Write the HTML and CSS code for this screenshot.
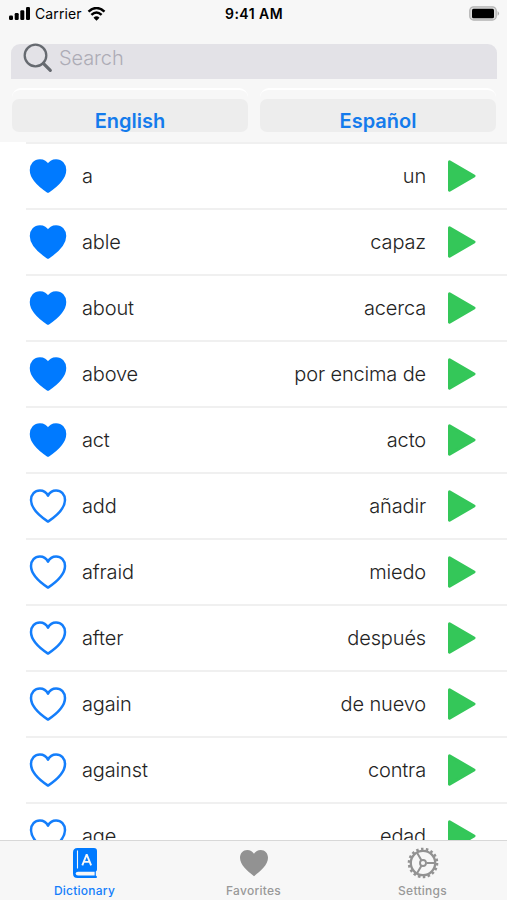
FILE: index.html
```html
<!DOCTYPE html>
<html lang="en">
<head>
<meta charset="utf-8">
<title>Dictionary</title>
<link rel="stylesheet" href="styles.css">
</head>
<body>
<svg class="defs" aria-hidden="true">
  <symbol id="heart" viewBox="0 0 38 34"><path d="M19 6.600C17.200 3 14.300 1.400 10.900 1.400C5.800 1.400 2 5.300 2 11C2 19.200 9.900 26.600 19 32.600C28.100 26.600 36 19.200 36 11C36 5.300 32.200 1.400 27.100 1.400C23.700 1.400 20.800 3 19 6.600Z"/></symbol>
  <symbol id="play" viewBox="0 0 28 32"><path d="M1.500 1.800L26 16L1.500 30.200Z"/></symbol>
</svg>
<div class="phone">
  <header class="top">
    <div class="status">
      <div class="carrier">
        <svg class="signal" viewBox="0 0 22 13"><rect x="0" y="8.500" width="4" height="4.500" rx="1.200"/><rect x="5.700" y="6" width="4" height="7" rx="1.200"/><rect x="11.300" y="3.300" width="4" height="9.700" rx="1.200"/><rect x="17" y="0" width="4" height="13" rx="1.200"/></svg>
        <span>Carrier</span>
        <svg class="wifi" viewBox="0 0 18 14"><path d="M1 4.600Q9-2.500 17 4.600M3.900 7.900Q9 3.200 14.100 7.900" fill="none" stroke="#000" stroke-width="2.500"/><path d="M6 10.700Q9 8 12 10.700L9 13.700Z"/></svg>
      </div>
      <div class="time">9:41 AM</div>
      <svg class="battery" viewBox="0 0 31 15"><rect x=".8" y=".8" width="26.400" height="13.200" rx="3.800" fill="#dcdcdc" stroke="#b4b4b4" stroke-width="1.300"/><rect x="3" y="2.700" width="22" height="9.500" rx="1.500"/><path d="M28.600 5Q31.500 7.400 28.600 9.800Z" fill="#aaa"/></svg>
    </div>
    <div class="search">
      <svg class="lens" viewBox="0 0 30 30"><circle cx="12.500" cy="12.500" r="10.800"/><path d="M20.300 20.300L27.300 27.300" stroke-width="3.200"/></svg>
      <span>Search</span>
    </div>
    <div class="langs">
      <div class="lang"><div class="pill">English</div></div>
      <div class="lang"><div class="pill">Español</div></div>
    </div>
  </header>
  <main class="list">
    <div class="row"><svg class="heart full"><use href="#heart"/></svg><span class="word">a</span><span class="tr">un</span><svg class="play"><use href="#play"/></svg></div>
    <div class="row"><svg class="heart full"><use href="#heart"/></svg><span class="word">able</span><span class="tr">capaz</span><svg class="play"><use href="#play"/></svg></div>
    <div class="row"><svg class="heart full"><use href="#heart"/></svg><span class="word">about</span><span class="tr">acerca</span><svg class="play"><use href="#play"/></svg></div>
    <div class="row"><svg class="heart full"><use href="#heart"/></svg><span class="word">above</span><span class="tr">por encima de</span><svg class="play"><use href="#play"/></svg></div>
    <div class="row"><svg class="heart full"><use href="#heart"/></svg><span class="word">act</span><span class="tr">acto</span><svg class="play"><use href="#play"/></svg></div>
    <div class="row"><svg class="heart"><use href="#heart"/></svg><span class="word">add</span><span class="tr">añadir</span><svg class="play"><use href="#play"/></svg></div>
    <div class="row"><svg class="heart"><use href="#heart"/></svg><span class="word">afraid</span><span class="tr">miedo</span><svg class="play"><use href="#play"/></svg></div>
    <div class="row"><svg class="heart"><use href="#heart"/></svg><span class="word">after</span><span class="tr">después</span><svg class="play"><use href="#play"/></svg></div>
    <div class="row"><svg class="heart"><use href="#heart"/></svg><span class="word">again</span><span class="tr">de nuevo</span><svg class="play"><use href="#play"/></svg></div>
    <div class="row"><svg class="heart"><use href="#heart"/></svg><span class="word">against</span><span class="tr">contra</span><svg class="play"><use href="#play"/></svg></div>
    <div class="row"><svg class="heart"><use href="#heart"/></svg><span class="word">age</span><span class="tr">edad</span><svg class="play"><use href="#play"/></svg></div>
  </main>
  <nav class="tabs">
    <div class="tab active">
      <svg class="tab-icon" viewBox="0 0 32 32"><path d="M8.500 1H25Q28 1 28 4V22.500Q28 24 26.800 24.500V28.500Q28 29 28 30Q28 31 27 31H8.500Q4 31 4 26.500V5.500Q4 1 8.500 1Z" fill="#007aff"/><path d="M8.500 3.500V21.500" stroke="#f7f7f7" stroke-width="1.100"/><path d="M9 24.700H25.600V28.600H9Q6.700 28.600 6.700 26.600Q6.700 24.700 9 24.700Z" fill="#f7f7f7"/><path d="M13.300 18.300L17.500 8H17.900L22.100 18.300M14.900 14.900H20.500" fill="none" stroke="#f7f7f7" stroke-width="1.900"/></svg>
      <span>Dictionary</span>
    </div>
    <div class="tab">
      <svg class="tab-icon" viewBox="0 0 32 32"><path d="M16 6.800C14.500 4.300 12.100 3 9.300 3C5.100 3 2 6.300 2 10.800C2 17.800 9 23.800 16 29.200C23 23.800 30 17.800 30 10.800C30 6.300 26.900 3 22.700 3C19.900 3 17.500 4.300 16 6.800Z" fill="#929292"/></svg>
      <span>Favorites</span>
    </div>
    <div class="tab">
      <svg class="tab-icon" viewBox="0 0 32 32" fill="none" stroke="#929292"><circle cx="16" cy="16" r="14" stroke-width="2.600" stroke-dasharray="2.500 2.387"/><circle cx="16" cy="16" r="12.200" stroke-width="2.300"/><circle cx="16" cy="16" r="3" stroke-width="1.900"/><path d="M19.500 16H27.500M14.300 13L10.200 5.900M14.300 19L10.200 26.100" stroke-width="2"/></svg>
      <span>Settings</span>
    </div>
  </nav>
</div>
</body>
</html>
```
FILE: styles.css
```css
* { box-sizing: border-box; }
body { margin: 0; background: #fff; font-family: Inter, "Liberation Sans", sans-serif; }
.defs { display: none; }
.phone { display: flex; flex-direction: column; width: 507px; height: 900px; overflow: hidden; }

.top { flex: none; height: 144px; background: linear-gradient(#f0f0f0, #f0f0f0) 26px 142px / 481px 2px no-repeat, linear-gradient(#f7f7f7 142px, #fff 142px); }
.status { display: grid; grid-template-columns: 1fr auto 1fr; align-items: center; height: 27px; padding: 0 8px 0 9px; }
.carrier { display: flex; align-items: center; font-size: 14px; letter-spacing: .1px; }
.signal { width: 22px; height: 13px; margin-right: 4px; }
.wifi { width: 19px; height: 14px; margin-left: 5px; }
.time { font-size: 14px; font-weight: 600; letter-spacing: .45px; }
.battery { width: 31px; height: 15px; justify-self: end; margin-right: -1px; }

.search { display: flex; align-items: center; height: 35px; margin: 17px 10px 0 11px; padding: 0 12px; border-radius: 9px 9px 0 0; background: #e3e2e7; color: #adacb6; font-size: 20px; font-weight: 300; }
.search span { margin: -8px 0 0 6px; letter-spacing: -.1px; }
.lens { width: 30px; height: 30px; margin-top: -7px; fill: none; stroke: #666a70; stroke-width: 2.300; stroke-linecap: round; }

.langs { display: grid; grid-template-columns: 1fr 1fr; gap: 12px; margin: 9px 11px 0 12px; }
.lang { padding-top: 9px; border-top: 2px solid #fff; border-radius: 9px; }
.pill { height: 33px; padding-top: 9px; border-radius: 7px; background: #ededed; color: #147bec; font-size: 20px; font-weight: 600; line-height: 26px; text-align: center; }

.list { flex: 1; min-height: 0; overflow: hidden; }
.row { display: flex; align-items: center; height: 66px; margin-left: 26px; padding: 0 31px 0 3px; border-bottom: 2px solid #f0f0f0; color: #242424; font-size: 20px; font-weight: 300; letter-spacing: -.15px; }
.heart { flex: none; width: 38px; height: 34px; fill: none; stroke: #147efb; stroke-width: 2.500; stroke-linejoin: round; }
.heart.full { fill: #007aff; stroke: #007aff; }
.word { margin-left: 15px; }
.tr { margin-left: auto; }
.play { flex: none; width: 28px; height: 32px; margin-left: 22px; fill: #34c759; stroke: #34c759; stroke-width: 3; stroke-linejoin: round; }

.tabs { flex: none; display: grid; grid-template-columns: repeat(3, 1fr); height: 60px; border-top: 1px solid #d8d8d8; background: #f7f7f7; }
.tab { display: flex; flex-direction: column; align-items: center; padding-top: 6px; color: #999; font-size: 12px; font-weight: 500; letter-spacing: .25px; line-height: 16px; }
.tab.active { color: #147efb; }
.tab-icon { width: 32px; height: 32px; margin-bottom: 4px; }
```
